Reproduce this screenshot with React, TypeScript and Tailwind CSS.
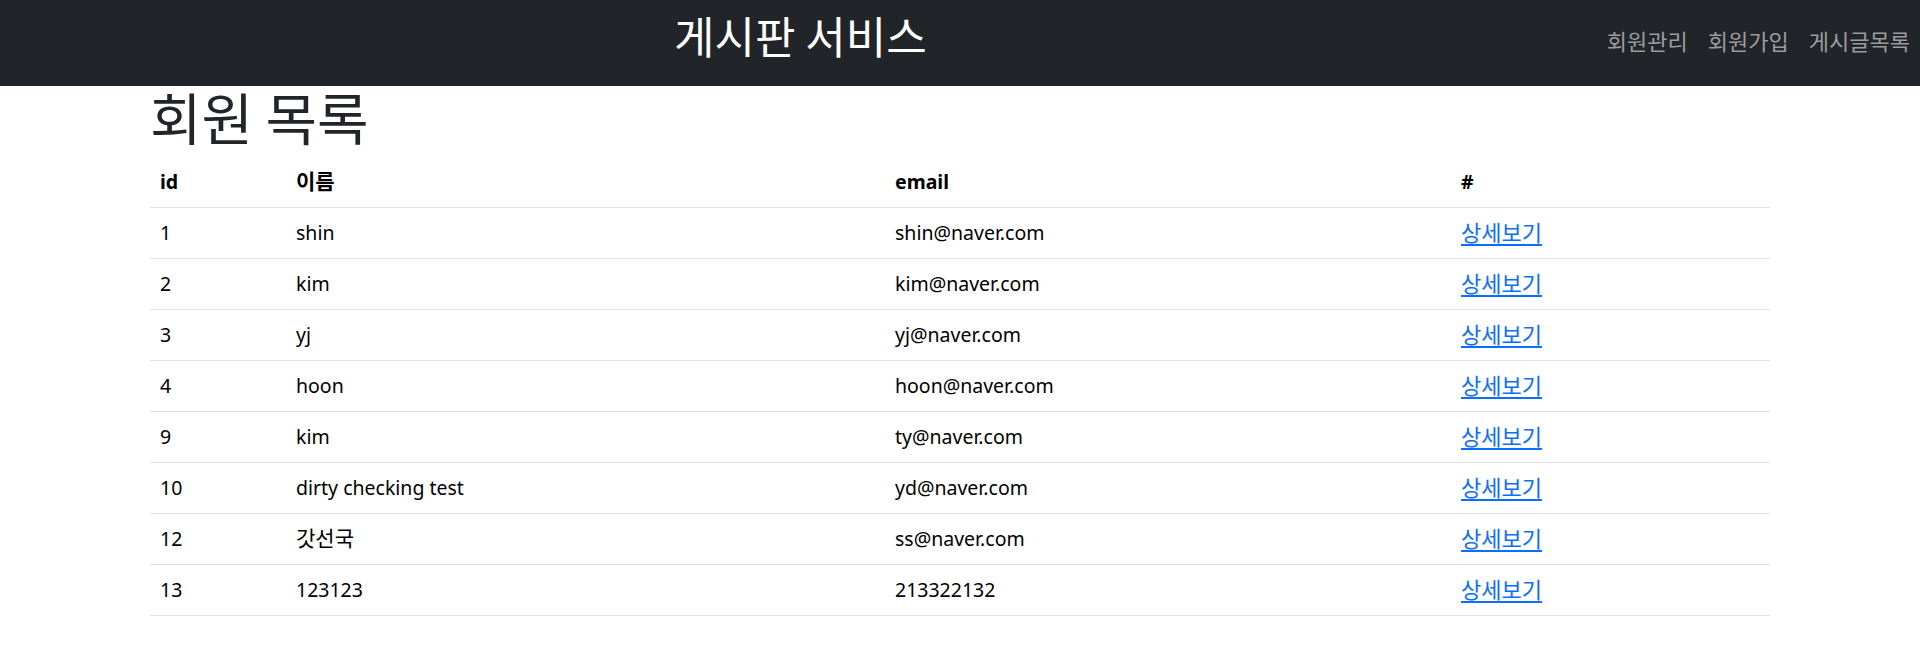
import React from "react";

const rows = [
  { id: "1", name: "shin", email: "shin@naver.com" },
  { id: "2", name: "kim", email: "kim@naver.com" },
  { id: "3", name: "yj", email: "yj@naver.com" },
  { id: "4", name: "hoon", email: "hoon@naver.com" },
  { id: "9", name: "kim", email: "ty@naver.com" },
  { id: "10", name: "dirty checking test", email: "yd@naver.com" },
  { id: "12", name: "갓선국", email: "ss@naver.com", ko: true },
  { id: "13", name: "123123", email: "213322132" },
];

export default function App() {
  return (
    <div className="min-h-[666px] bg-white font-[family-name:Noto_Sans,Noto_Sans_CJK_KR,sans-serif] text-[#212529]">
      <header className="flex h-[86px] items-start bg-[#212529]">
        <h2 className="ml-[674px] pt-[9px] text-[44px] leading-[52px] font-normal text-white font-[family-name:Noto_Sans_CJK_KR,sans-serif]">
          게시판 서비스
        </h2>
        <nav className="ml-auto flex pr-[10px] pt-[25px] text-[22px] leading-[30px] text-[#9b9d9f] font-[family-name:Noto_Sans_CJK_KR,sans-serif]">
          <a className="mr-[20px]">회원관리</a>
          <a className="mr-[20px]">회원가입</a>
          <a>게시글목록</a>
        </nav>
      </header>
      <main className="mx-auto max-w-[1650px] px-[15px]">
        <h1 className="mb-[10px] text-[56px] leading-[60px] font-normal text-[#212529] font-[family-name:Noto_Sans_CJK_KR,sans-serif]">
          회원 목록
        </h1>
        <table className="w-full border-collapse text-left text-[19.5px] text-black">
          <thead>
            <tr className="h-[51px] border-b border-[#dee2e6]">
              <th className="w-[136px] px-[10px] font-bold">id</th>
              <th className="w-[599px] px-[10px] font-bold text-[21px]">이름</th>
              <th className="w-[566px] px-[10px] font-bold">email</th>
              <th className="px-[10px] font-bold">#</th>
            </tr>
          </thead>
          <tbody>
            {rows.map((r) => (
              <tr key={r.id} className="h-[51px] border-b border-[#dee2e6]">
                <td className="px-[10px]">{r.id}</td>
                <td className={r.ko ? "px-[10px] text-[21px]" : "px-[10px]"}>{r.name}</td>
                <td className="px-[10px]">{r.email}</td>
                <td className="px-[10px]">
                  <a className="text-[22px] text-[#0d6efd] underline decoration-[1.5px] underline-offset-[3px]">
                    상세보기
                  </a>
                </td>
              </tr>
            ))}
          </tbody>
        </table>
      </main>
    </div>
  );
}
